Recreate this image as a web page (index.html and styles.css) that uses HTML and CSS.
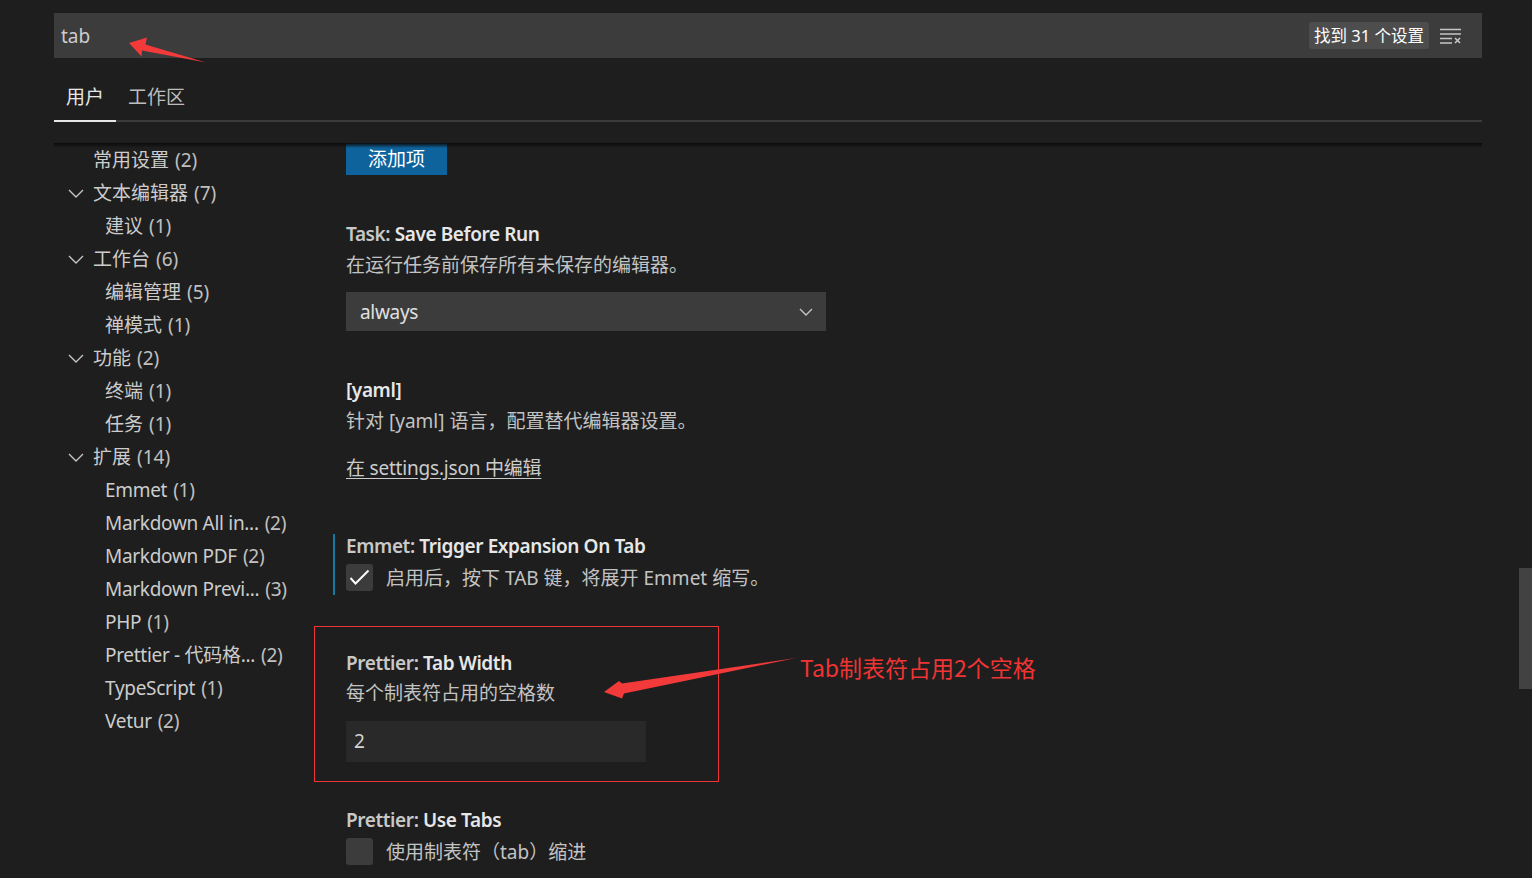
FILE: index.html
```html
<!DOCTYPE html>
<html lang="zh-CN">
<head>
<meta charset="utf-8">
<title>设置</title>
<link rel="stylesheet" href="styles.css">
</head>
<body>
<div class="editor">
  <div class="search">
    <span class="search-text">tab</span>
    <span class="count">找到 31 个设置</span>
    <svg class="clear-icon" width="22" height="16" viewBox="0 0 22 16">
      <path d="M0 1.5H21M0 6H21M0 10.5H12M0 15H12" stroke="#c5c5c5" stroke-width="1.6" fill="none"/>
      <path d="M15 10L20 15M20 10L15 15" stroke="#c5c5c5" stroke-width="1.6" fill="none"/>
    </svg>
  </div>
  <div class="tabs">
    <div class="tab active">用户</div>
    <div class="tab">工作区</div>
  </div>
  <div class="body">
    <div class="scroll-shadow"></div>
    <ul class="tree">
      <li class="row l1"><span class="twistie"></span>常用设置 <span class="cnt">(2)</span></li>
      <li class="row l1"><span class="twistie"><svg width="16" height="9" viewBox="0 0 16 9"><path d="M1 1L8 8L15 1" stroke="#c5c5c5" stroke-width="1.4" fill="none"/></svg></span>文本编辑器 <span class="cnt">(7)</span></li>
      <li class="row l2">建议 <span class="cnt">(1)</span></li>
      <li class="row l1"><span class="twistie"><svg width="16" height="9" viewBox="0 0 16 9"><path d="M1 1L8 8L15 1" stroke="#c5c5c5" stroke-width="1.4" fill="none"/></svg></span>工作台 <span class="cnt">(6)</span></li>
      <li class="row l2">编辑管理 <span class="cnt">(5)</span></li>
      <li class="row l2">禅模式 <span class="cnt">(1)</span></li>
      <li class="row l1"><span class="twistie"><svg width="16" height="9" viewBox="0 0 16 9"><path d="M1 1L8 8L15 1" stroke="#c5c5c5" stroke-width="1.4" fill="none"/></svg></span>功能 <span class="cnt">(2)</span></li>
      <li class="row l2">终端 <span class="cnt">(1)</span></li>
      <li class="row l2">任务 <span class="cnt">(1)</span></li>
      <li class="row l1"><span class="twistie"><svg width="16" height="9" viewBox="0 0 16 9"><path d="M1 1L8 8L15 1" stroke="#c5c5c5" stroke-width="1.4" fill="none"/></svg></span>扩展 <span class="cnt">(14)</span></li>
      <li class="row l2 latin">Emmet <span class="cnt">(1)</span></li>
      <li class="row l2 latin">Markdown All in... <span class="cnt">(2)</span></li>
      <li class="row l2 latin">Markdown PDF <span class="cnt">(2)</span></li>
      <li class="row l2 latin">Markdown Previ... <span class="cnt">(3)</span></li>
      <li class="row l2 latin">PHP <span class="cnt">(1)</span></li>
      <li class="row l2 latin">Prettier - 代码格... <span class="cnt">(2)</span></li>
      <li class="row l2 latin">TypeScript <span class="cnt">(1)</span></li>
      <li class="row l2 latin">Vetur <span class="cnt">(2)</span></li>
    </ul>
    <div class="content">
      <button class="btn">添加项</button>

      <div class="setting s-task">
        <div class="title"><span class="cat">Task: </span>Save Before Run</div>
        <div class="desc">在运行任务前保存所有未保存的编辑器。</div>
        <div class="select">
          <span>always</span>
          <svg width="14" height="8" viewBox="0 0 14 8"><path d="M1 1L7 7L13 1" stroke="#c5c5c5" stroke-width="1.4" fill="none"/></svg>
        </div>
      </div>

      <div class="setting s-yaml">
        <div class="title">[yaml]</div>
        <div class="desc">针对 [yaml] 语言，配置替代编辑器设置。</div>
        <div class="link">在 settings.json 中编辑</div>
      </div>

      <div class="setting s-emmet focused">
        <div class="title"><span class="cat">Emmet: </span>Trigger Expansion On Tab</div>
        <div class="check-row">
          <span class="checkbox"><svg width="21" height="17" viewBox="0 0 21 17"><path d="M1.5 9L6.5 14.5L19.5 1.5" stroke="#ffffff" stroke-width="1.9" fill="none"/></svg></span>
          <span class="check-label">启用后，按下 TAB 键，将展开 Emmet 缩写。</span>
        </div>
      </div>

      <div class="setting s-tabwidth">
        <div class="title"><span class="cat">Prettier: </span>Tab Width</div>
        <div class="desc">每个制表符占用的空格数</div>
        <div class="input">2</div>
      </div>

      <div class="setting s-usetabs">
        <div class="title"><span class="cat">Prettier: </span>Use Tabs</div>
        <div class="check-row">
          <span class="checkbox"></span>
          <span class="check-label">使用制表符（tab）缩进</span>
        </div>
      </div>
    </div>
  </div>
</div>

<div class="scroll-thumb"></div>

<svg class="annotations" width="1532" height="878" viewBox="0 0 1532 878">
  <polygon points="129,43 147,37.5 145.5,44.5 206,62.5 142,50.5 141.5,56.5" fill="#f23a3a"/>
  <rect x="314.5" y="626.5" width="404" height="155" fill="none" stroke="#ef3535" stroke-width="1"/>
  <polygon points="604,692 619,681 622,683.5 796,658 624,693.5 622,698.5" fill="#f23a3a"/>
</svg>
<div class="annot-text">Tab制表符占用2个空格</div>
</body>
</html>
```

FILE: styles.css
```css
* { box-sizing: border-box; }
html, body {
  margin: 0;
  padding: 0;
  background: #1e1e1e;
  height: 100%;
  overflow: hidden;
}
body {
  font-family: "Noto Sans", "Noto Sans CJK SC", sans-serif;
  font-size: 19px;
  color: #cccccc;
}
.editor {
  padding: 13px 50px 0 54px;
}
.search {
  height: 45px;
  background: #3c3c3c;
  display: flex;
  align-items: center;
  padding: 0 20px 0 7px;
}
.search-text {
  flex: 1;
  color: #cccccc;
  line-height: 26px;
}
.count {
  background: #4d4d4d;
  color: #ffffff;
  font-size: 16.5px;
  line-height: 27px;
  height: 27px;
  padding: 0 5px;
  border-radius: 3px;
  margin-right: 11px;
}
.clear-icon { display: block; }
.tabs {
  display: flex;
  height: 64px;
  box-shadow: inset 0 -2px 0 #3b3b3b;
}
.tab {
  padding: 26px 12px 0;
  line-height: 26px;
  height: 64px;
  color: #bdbdbd;
}
.tab.active {
  color: #e7e7e7;
  border-bottom: 2px solid #e7e7e7;
}
.body {
  position: relative;
  margin-top: 21px;
  display: flex;
}
.scroll-shadow {
  position: absolute;
  left: 0;
  right: 0;
  top: 0;
  height: 5px;
  background: linear-gradient(#0b0b0b, rgba(11,11,11,0));
  z-index: 2;
}
.tree {
  list-style: none;
  margin: 1px 0 0;
  padding: 0;
  width: 292px;
  flex: none;
}
.row {
  height: 33px;
  line-height: 33px;
  white-space: nowrap;
  color: #cccccc;
  display: flex;
  align-items: center;
}
.row .cnt { margin-left: 6px; color: #c0c0c0; }
.row.latin { letter-spacing: -0.3px; }
.l1 { padding-left: 12px; }
.l2 { padding-left: 51px; }
.twistie {
  width: 27px;
  display: flex;
  align-items: center;
  padding-left: 2px;
}
.twistie svg { display: block; }
.content {
  flex: 1;
}
.btn {
  display: block;
  height: 32px;
  padding: 0 22px;
  border: 0;
  background: #0e639c;
  color: #ffffff;
  font: inherit;
  line-height: 32px;
}
.setting .title {
  line-height: 24px;
  font-weight: 600;
  color: #e7e7e7;
  white-space: nowrap;
  letter-spacing: -0.4px;
}
.setting .cat {
  color: #c8c8c8;
}
.setting .desc {
  margin-top: 6px;
  line-height: 26px;
  color: #c3c3c3;
}
.s-task { margin-top: 47px; }
.select {
  margin-top: 14px;
  width: 480px;
  height: 39px;
  background: #3c3c3c;
  display: flex;
  align-items: center;
  justify-content: space-between;
  padding: 0 13px 0 14px;
  color: #e0e0e0;
  letter-spacing: -0.3px;
}
.select svg { display: block; }
.s-yaml { margin-top: 47px; }
.link {
  margin-top: 21px;
  line-height: 26px;
  text-decoration: underline;
  text-underline-offset: 3px;
  color: #cccccc;
  letter-spacing: -0.2px;
}
.s-emmet {
  margin-top: 53px;
  margin-left: -13px;
  padding-left: 11px;
  padding-bottom: 4px;
  border-left: 2px solid #137aa3;
}
.check-row {
  margin-top: 6px;
  display: flex;
  align-items: center;
  gap: 13px;
}
.checkbox {
  width: 27px;
  height: 27px;
  background: #3c3c3c;
  border-radius: 3px;
  display: flex;
  align-items: center;
  justify-content: center;
}
.checkbox svg { display: block; }
.check-label {
  color: #c3c3c3;
  line-height: 26px;
}
.s-tabwidth { margin-top: 56px; }
.s-tabwidth .desc { margin-top: 5px; }
.input {
  margin-top: 15px;
  width: 300px;
  height: 41px;
  background: #292929;
  padding-left: 8px;
  line-height: 41px;
  color: #d4d4d4;
}
.s-usetabs { margin-top: 46px; }
.scroll-thumb {
  position: absolute;
  left: 1519px;
  top: 568px;
  width: 13px;
  height: 121px;
  background: #424242;
}
.annotations {
  position: absolute;
  left: 0;
  top: 0;
  pointer-events: none;
}
.annot-text {
  position: absolute;
  left: 800px;
  top: 652px;
  font-family: "Noto Sans CJK SC", "Noto Sans", sans-serif;
  font-size: 23px;
  line-height: 30px;
  color: #f03434;
  white-space: nowrap;
}
```
